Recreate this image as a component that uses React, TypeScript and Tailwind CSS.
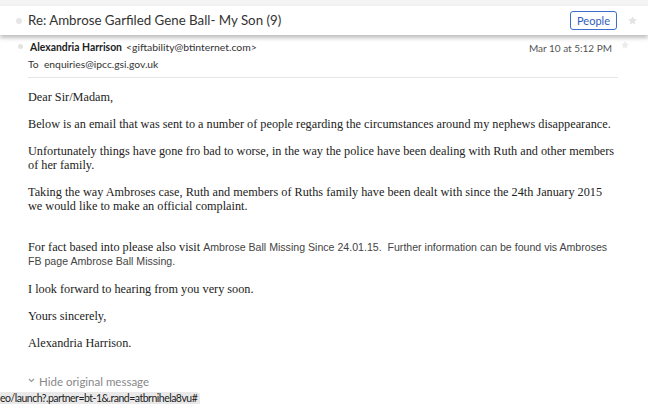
import React from 'react';

const ui = { fontFamily: 'Lato, "Noto Sans", Arial, sans-serif' };
const serif = { fontFamily: '"Liberation Serif", "Times New Roman", serif' };
const arial = { fontFamily: '"Liberation Sans", Arial, sans-serif' };

function Star({ className }: { className?: string }) {
    return (
        <svg viewBox="0 0 24 24" className={className} fill="currentColor">
            <path d="M12 2.5l2.9 6.1 6.6.8-4.9 4.6 1.3 6.6L12 17.3l-5.9 3.3 1.3-6.6-4.9-4.6 6.6-.8z" />
        </svg>
    );
}

export default function App() {
    return (
        <div className="w-[648px] h-[404px] overflow-hidden bg-white relative" style={ui}>
            <div className="h-[6px] bg-[#f4f4f4]" />

            {/* Subject header */}
            <div className="h-[29px] flex items-center pl-[16px] pr-[10px] bg-white shadow-[0_3px_4px_rgba(0,0,0,0.25)] relative z-10">
                <span className="w-[6px] h-[6px] rounded-full bg-[#e6e6e6]" />
                <span className="ml-[6px] text-[13.3px] text-[#333]">Re: Ambrose Garfiled Gene Ball- My Son (9)</span>
                <div className="flex-1" />
                <button className="h-[19px] w-[47px] border border-[#3d6dcc] rounded-[3px] text-[11px] text-[#2f5dba] leading-none">
                    People
                </button>
                <Star className="w-[11px] h-[11px] text-[#e3e3e3] ml-[10px]" />
            </div>

            {/* Message header */}
            <div className="pl-[18px] pr-[18px] pt-[5px]">
                <div className="flex items-center h-[16px]">
                    <span className="w-[5px] h-[5px] rounded-full bg-[#e3e3e3] -mt-[3px]" />
                    <span className="ml-[7px] text-[10.4px] font-bold text-[#222]">Alexandria Harrison</span>
                    <span className="ml-[4px] text-[10.4px] text-[#333]">&lt;giftability@btinternet.com&gt;</span>
                    <div className="flex-1" />
                    <span className="text-[10px] text-[#555]">Mar 10 at 5:12 PM</span>
                    <Star className="w-[10px] h-[10px] text-[#ececec] ml-[8px] -mt-[6px]" />
                </div>
                <div className="text-[10.3px] leading-[15px] text-[#333] pl-[10px] mt-[1px]">To&nbsp; enquiries@ipcc.gsi.gov.uk</div>
                <div className="h-px bg-[#e5e5e5] ml-[10px] mr-[12px] mt-[5px]" />
            </div>

            {/* Body */}
            <div className="pl-[28px] pt-[12px] w-[616px] text-[12.25px] leading-[14px] text-[#222]" style={serif}>
                <p>Dear Sir/Madam,</p>
                <p className="mt-[13px]">Below is an email that was sent to a number of people regarding the circumstances around my nephews disappearance.</p>
                <p className="mt-[13px]">Unfortunately things have gone fro bad to worse, in the way the police have been dealing with Ruth and other members of her family.</p>
                <p className="mt-[13px]">Taking the way Ambroses case, Ruth and members of Ruths family have been dealt with since the 24th January 2015 we would like to make an official complaint.</p>
                <p className="mt-[27px]">
                    For fact based into please also visit{' '}
                    <span className="text-[10.6px] text-[#444]" style={arial}>
                        Ambrose Ball Missing Since 24.01.15.&nbsp; Further information can be found vis Ambroses FB page Ambrose Ball Missing.
                    </span>
                </p>
                <p className="mt-[14px]">I look forward to hearing from you very soon.</p>
                <p className="mt-[13px]">Yours sincerely,</p>
                <p className="mt-[13px]">Alexandria Harrison.</p>
            </div>

            <div className="pl-[28px] mt-[23px] flex items-center text-[11.5px] text-[#888]">
                <svg viewBox="0 0 7 5" className="w-[7px] h-[5px] mr-[4px] -mt-[3px]" fill="none" stroke="#999" strokeWidth="1.2">
                    <path d="M1 1l2.5 2.5L6 1" />
                </svg>
                Hide original message
            </div>

            {/* Status bar */}
            <div className="absolute left-0 bottom-0 h-[12px] w-[200px] bg-[#e9e9e9] rounded-tr-[4px] text-[10.5px] tracking-[-0.5px] leading-[13px] text-[#222] whitespace-nowrap overflow-hidden" style={ui}>
                eo/launch?.partner=bt-1&amp;.rand=atbrnihela8vu#
            </div>
        </div>
    );
}
